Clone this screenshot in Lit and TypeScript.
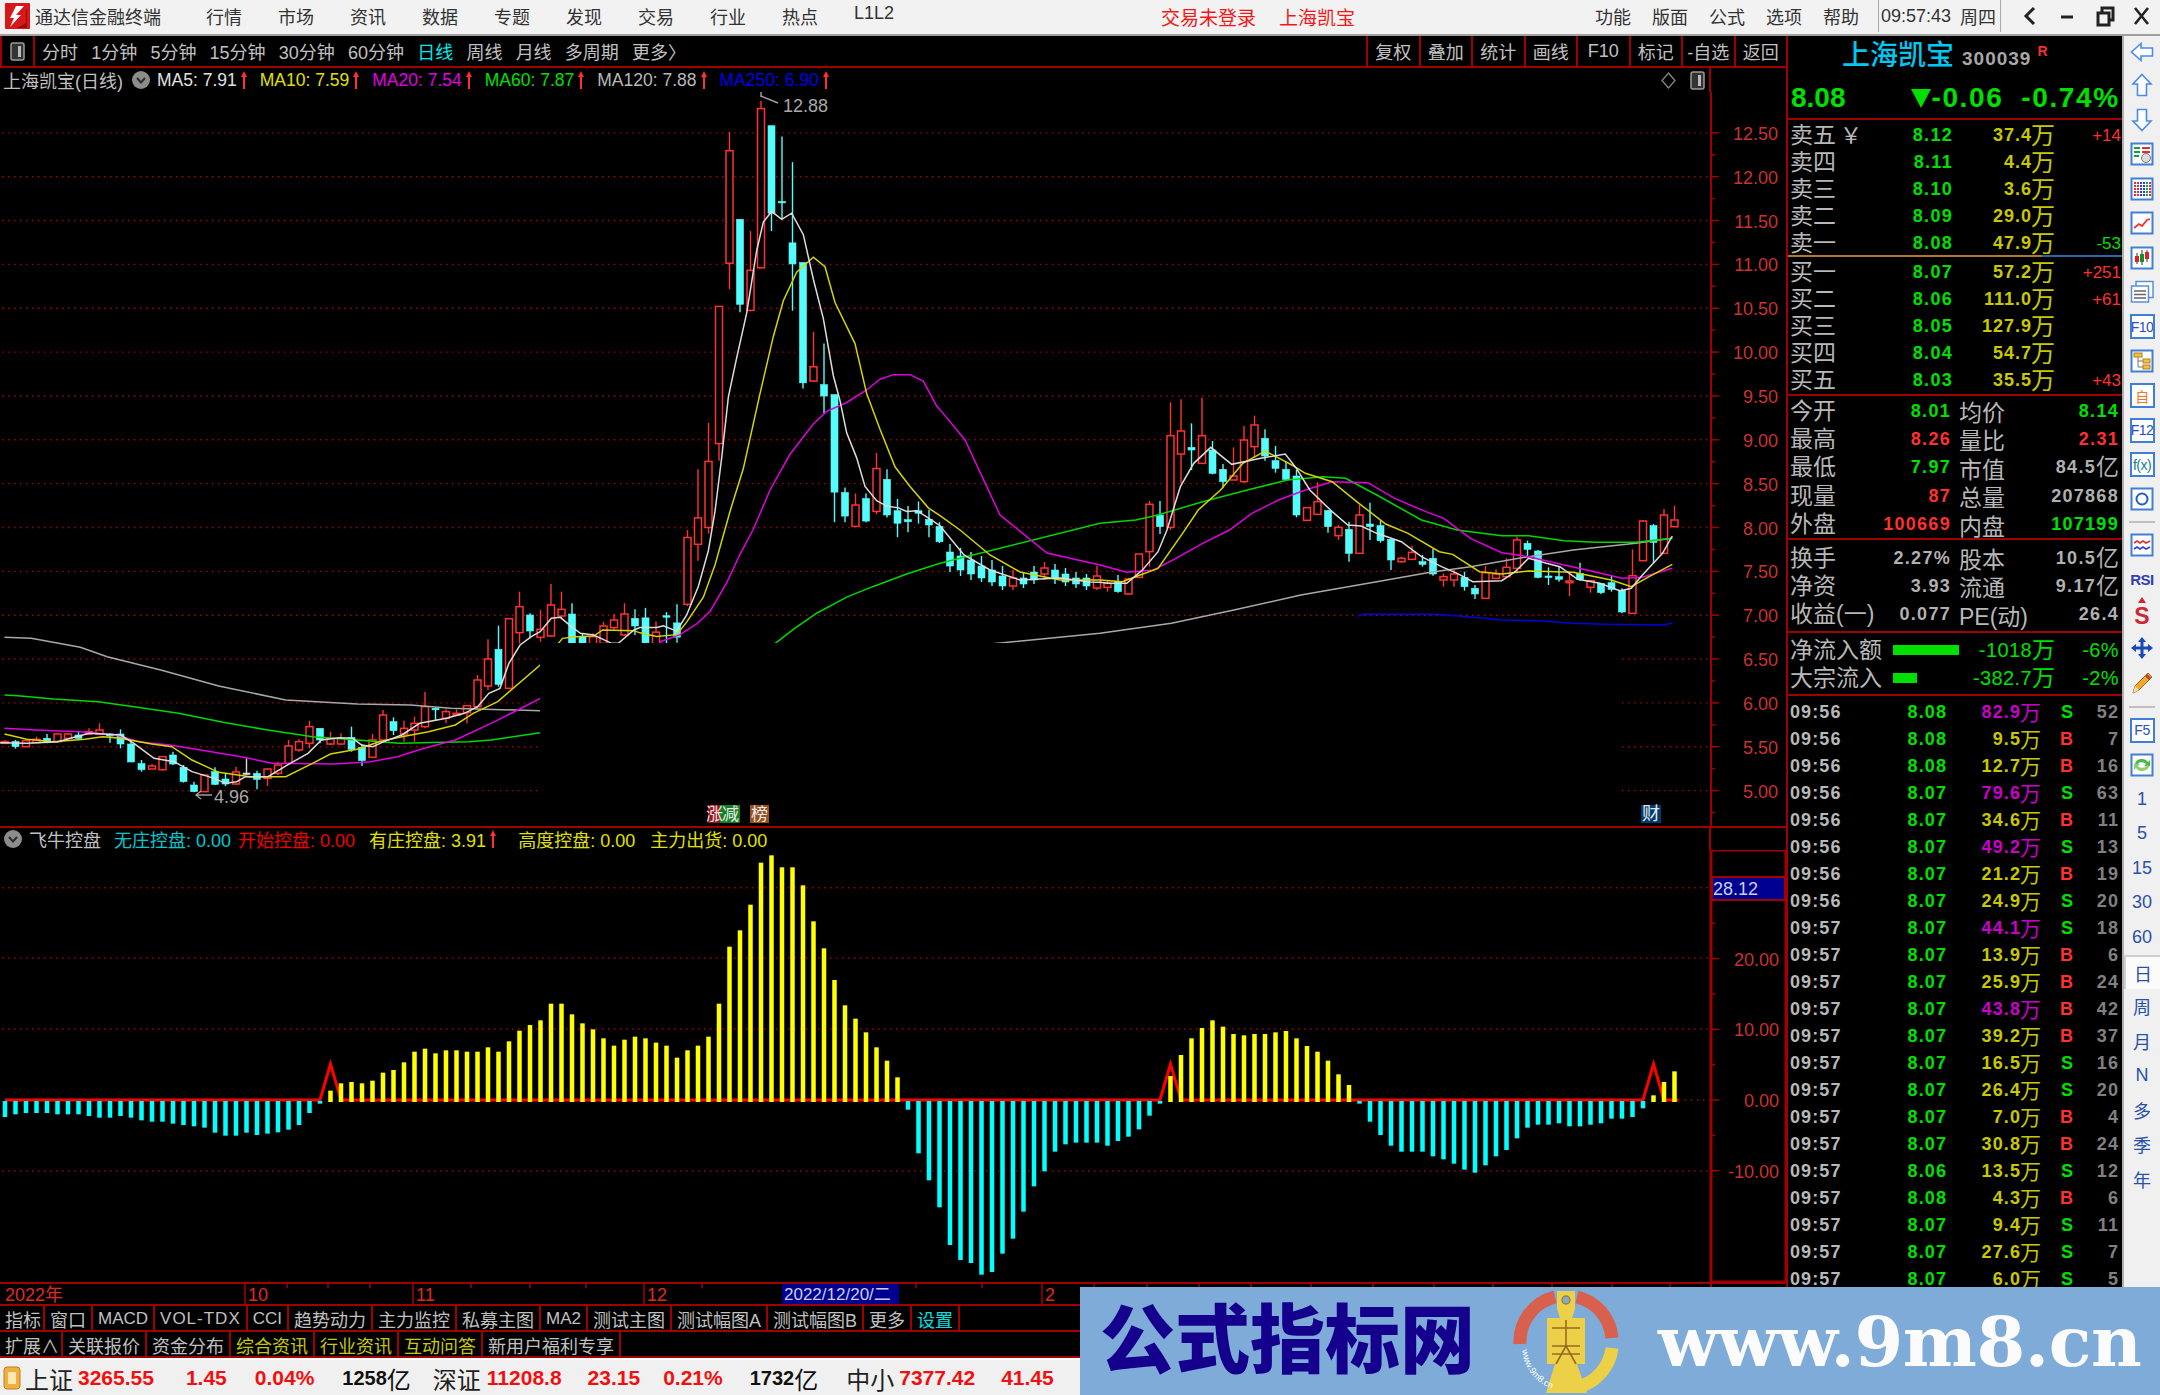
import { html, svg, css, LitElement } from 'lit';
import { customElement } from 'lit/decorators.js';

type Row = [string, number, number, number, number];

// candles are read off the chart in its own pixels, three runs with different scale
const at = (y0: number, k: number, list: Row[]): Row[] =>
  list.map(([c, a, b, d, e]) => [c, y0 + a / k, y0 + b / k, y0 + d / k, y0 + e / k] as Row);

const candles: Row[] = [
  ...at(560, 3, [
    ['r',545,550,540,552],['c',545,560,540,566],['r',542,560,540,560],['r',538,548,530,548],['c',535,548,522,550],
    ['r',522,545,522,545],['r',522,535,520,538],['c',525,535,515,538],['r',515,522,505,525],['r',510,522,490,525],
    ['c',522,528,520,548],['c',522,552,508,565],['c',552,606,540,606],['c',611,629,600,635],['r',618,627,612,627],
    ['r',590,629,590,632],['c',585,612,575,615],['c',622,665,615,668],['c',675,695,665,697],['r',645,695,645,695],
    ['c',635,673,622,675],['c',657,672,640,678],['r',636,672,620,674],['w',639,641,595,645],['c',640,658,632,688],
    ['r',627,655,625,678],['r',615,640,605,645],['r',558,610,540,615],['r',545,570,538,575],['r',500,550,482,565],
    ['c',505,540,505,550],['r',535,552,515,555],['r',535,552,520,555],['c',533,568,500,575],['c',562,602,552,618],
    ['r',540,592,522,594],['r',465,540,450,545],['c',485,512,472,525],['r',505,522,482,545],['r',490,510,470,545],
    ['r',440,500,396,505],['c',445,448,442,480],['r',455,475,448,490],['r',460,465,448,468],['r',437,458,435,490],
    ['r',360,440,345,445],['r',297,378,238,390],['c',268,373,197,380],['r',176,385,175,388],['r',140,218,95,250],
    ['c',165,213,160,235],['r',208,232,150,245],['r',135,228,72,230],['r',148,168,95,175],['c',162,250,130,268],
    ['c',230,260,220,270],['r',230,260,220,270],['r',198,250,185,260],['r',180,203,162,210],['r',162,225,130,228],
    ['c',175,198,148,225],
  ]),
  ...at(90, 2.8, [
    ['c',1478,1548,1450,1550],['r',1518,1552,1488,1552],['c',1472,1476,1462,1550],['c',1492,1532,1440,1548],
    ['r',1253,1440,1232,1445],['r',1198,1272,1062,1318],['r',1040,1225,932,1242],['r',606,990,605,1038],
    ['r',170,485,118,558],['c',362,600,362,622],['r',505,617,395,620],['r',52,498,30,498],['c',100,345,100,395],
    ['c',312,316,130,360],['c',428,487,202,618],['c',483,820,483,836],['r',775,815,677,818],['c',825,857,710,905],
    ['c',853,1126,853,1210],['c',1127,1193,1113,1210],['r',1162,1222,1130,1222],['c',1144,1207,1130,1210],
    ['r',1060,1180,1016,1188],['c',1090,1190,1062,1197],['c',1178,1213,1145,1252],['c',1203,1209,1165,1238],
    ['c',1178,1185,1152,1214],['c',1202,1218,1175,1252],['c',1222,1265,1210,1268],
  ]),
  ['c',552,566,544,572],['c',556,570,548,576],['c',560,574,552,580],['c',566,578,556,582],['c',570,582,560,586],
  ['c',576,586,566,590],['r',578,586,570,590],['c',578,584,572,588],['c',572,580,566,584],['r',568,574,562,580],
  ['c',570,578,564,584],['c',574,582,568,586],['c',578,584,572,588],['c',578,586,574,590],['r',576,588,566,590],
  ...at(370, 3, [
    ['r',640,652,632,665],['c',635,665,615,668],['r',627,672,625,673],['r',552,622,552,622],['r',403,545,393,590],
    ['c',435,470,393,492],['r',197,472,97,480],['r',183,252,88,340],['c',232,240,160,300],['r',197,280,83,280],
    ['c',240,310,213,313],['c',298,335,282,355],['r',318,330,232,330],['r',210,335,168,338],['r',165,230,137,262],
    ['c',205,258,178,272],['c',272,295,228,308],['c',298,328,275,333],['c',318,435,300,442],['r',413,451,412,452],
    ['r',395,433,337,434],['c',422,470,420,488],['r',472,497,465,510],['c',478,550,455,575],['r',435,550,405,550],
    ['c',462,470,398,510],['c',467,512,450,518],['c',508,570,508,600],['r',565,575,560,578],['r',547,568,527,570],
    ['c',575,583,555,590],['c',565,612,537,617],['r',620,630,610,650],['r',612,630,600,650],['c',622,650,605,662],
    ['c',655,672,645,687],['r',608,685,588,686],['r',612,625,598,628],['r',592,620,565,622],['r',510,595,500,610],
    ['c',520,538,512,560],['c',543,622,540,625],['c',618,620,592,645],['c',620,628,590,635],['r',633,638,605,678],
    ['c',610,628,578,632],['r',632,652,630,668],['c',640,668,640,672],['c',638,658,618,665],['c',660,726,655,730],
    ['r',617,730,538,732],['r',453,572,450,574],['c',467,517,462,580],['r',435,550,417,552],['r',450,470,407,472],
  ]),
];

const z8 = (p: number[][]) => p.map(([x, y]) => [640 + x / 3, 90 + y / 2.8]);
const z9 = (p: number[][]) => p.map(([x, y]) => [x / 2.24, 560 + y / 3]);
const z10 = (p: number[][]) => p.map(([x, y]) => [1100 + x / 2.24, 370 + y / 3]);

const maLines: { color: string; pts: number[][] }[] = [
  { color: '#a8a8a8', pts: [
    ...z9([[10,232],[70,235],[180,262],[240,290],[360,330],[490,378],[640,420],[800,432],[920,435],[1010,445],[1210,452]]),
    [985,644.5],
    ...z10([[0,790],[160,760],[300,720],[450,675],[620,635],[740,607],[830,590],[960,560],[1060,540],[1200,520],[1282,505]]),
  ] },
  { color: '#00d800', pts: [
    ...z9([[10,405],[40,407],[120,417],[220,425],[300,440],[400,460],[500,487],[600,510],[700,530],[800,540],[895,550],[1050,545],[1100,540],[1210,518]]),
    ...z8([[405,1550],[460,1510],[530,1465],[620,1420],[700,1390],[800,1355],[900,1325]]),
    ...z10([[0,460],[80,450],[130,435],[230,395],[330,360],[420,330],[500,320],[550,325],[620,375],[720,450],[800,480],[900,497],[960,497],[1040,512],[1110,517],[1200,517],[1282,505]]),
  ] },
  { color: '#0000e0', pts: z10([[578,738],[590,733],[750,733],[850,743],[900,750],[990,753],[1060,760],[1130,763],[1260,765],[1282,760]]) },
  { color: '#e000e0', pts: [
    ...z9([[10,505],[80,510],[180,515],[260,525],[310,545],[380,555],[450,570],[540,590],[610,610],[750,612],[830,605],[890,590],[950,565],[1020,540],[1100,490],[1160,450],[1210,415],[1480,250]]),
    ...z8([[60,1545],[120,1525],[170,1495],[210,1460],[260,1380],[300,1300],[340,1230],[390,1120],[450,1020],[520,935],[560,900],[620,875],[680,840],[720,810],[760,797],[810,797],[850,815],[890,885],[900,895]]),
    [965,440],[1000,515],[1047,553],
    ...z10([[0,585],[60,607],[120,600],[170,565],[230,520],[290,480],[340,430],[400,390],[460,360],[520,335],[600,338],[660,385],[730,425],[770,445],[830,505],[900,548],[960,560],[1040,585],[1100,603],[1170,625],[1215,622],[1282,595]]),
  ] },
  { color: '#d4d400', pts: [
    ...z9([[10,522],[60,538],[120,545],[190,538],[230,530],[270,535],[340,552],[385,560],[430,600],[490,637],[560,650],[640,650],[700,610],[740,582],[800,568],[850,545],[900,530],[960,515],[1020,495],[1060,460],[1115,425],[1210,315],[1260,235],[1290,230],[1330,228],[1350,210],[1420,212]]),
    ...z8([[0,1520],[50,1530],[110,1525],[140,1490],[190,1420],[225,1330],[270,1180],[310,1060],[360,850],[400,690],[430,590],[470,510],[520,468],[555,495],[585,595],[645,710],[680,850],[720,950],[765,1055],[810,1110],[865,1170],[900,1192]]),
    [960,530],[990,555],[1020,572],[1060,580],[1090,580],
    ...z10([[0,630],[50,635],[90,615],[130,595],[185,490],[220,420],[270,360],[320,280],[370,243],[430,285],[460,310],[520,335],[580,400],[640,462],[690,490],[760,545],[790,553],[850,605],[900,612],[960,603],[1060,607],[1145,630],[1190,650],[1230,620],[1282,583]]),
  ] },
  { color: '#dcdcdc', pts: [
    ...z9([[0,548],[60,550],[130,545],[170,530],[200,520],[270,525],[300,550],[345,595],[390,605],[430,635],[480,655],[505,670],[530,665],[550,650],[600,650],[650,610],[690,580],[720,540],[760,533],[790,535],[810,555],[835,560],[860,545],[900,525],[940,490],[1000,475],[1040,460],[1070,440],[1095,400],[1120,385],[1140,310],[1165,255],[1190,230],[1210,215],[1235,175],[1255,172],[1280,200],[1300,220],[1330,225],[1370,250],[1385,250],[1420,210]]),
    ...z8([[0,1505],[50,1505],[70,1500],[110,1515],[140,1470],[175,1390],[205,1290],[225,1180],[245,1030],[265,860],[290,750],[320,625],[350,450],[370,370],[395,340],[425,362],[455,345],[490,405],[520,530],[550,640],[580,800],[600,870],[620,960],[650,1030],[675,1110],[710,1150],[740,1165],[775,1170],[800,1180],[830,1178],[860,1195],[900,1220]]),
    [964,555],[990,570],[1020,580],[1060,578],[1090,582],
    ...z10([[0,637],[20,640],[60,640],[95,600],[130,545],[150,480],[180,350],[210,280],[248,232],[295,283],[360,265],[415,252],[440,295],[470,360],[520,425],[555,465],[585,468],[620,490],[675,515],[720,560],[765,590],[800,610],[835,635],[900,632],[930,605],[960,565],[1000,580],[1030,590],[1070,628],[1120,640],[1165,663],[1190,655],[1215,615],[1260,550],[1282,498]]),
  ] },
];

// 飞牛控盘 bars, one value per day, in px x 3 above (+) or below (-) the zero line
const bars = [
  -48,-40,-36,-36,-36,-40,-40,-40,-45,-50,-50,-45,-50,-58,-62,-62,-68,-72,-76,-80,-95,-104,-104,-95,-102,-98,-94,-86,-72,-36,-8,
  28,50,54,50,58,82,90,113,145,154,140,149,149,145,145,158,145,176,208,225,239,289,289,257,230,212,185,163,181,190,185,172,163,127,149,163,190,289,460,509,586,712,734,698,698,644,536,455,360,284,244,203,158,118,68,
  -26,-157,-238,-319,-432,-477,-486,-521,-513,-458,-413,-332,-256,-211,-152,-130,-125,-125,-125,-134,-120,-107,-85,-44,-8,
  72,135,185,216,239,220,198,194,198,198,203,207,185,162,145,118,77,45,
  -8,-62,-102,-134,-152,-152,-152,-166,-175,-188,-206,-215,-193,-166,-147,-112,-80,-71,-71,-67,-76,-76,-71,-67,-53,-53,-48,-22,
  14,54,86,
];

const dayX = (i: number) => 5 + 10.5 * i;
const priceY = (p: number) => 527.5 - (p - 8) * 87.7;
const zeroY = 1100;

const buyBook = [
  ['买一', '8.07', '57.2', '+251', 'up'], ['买二', '8.06', '111.0', '+61', 'up'], ['买三', '8.05', '127.9', '', ''],
  ['买四', '8.04', '54.7', '', ''], ['买五', '8.03', '35.5', '+43', 'up'],
];
const sellBook = [
  ['卖五', '8.12', '37.4', '+14', 'up'], ['卖四', '8.11', '4.4', '', ''], ['卖三', '8.10', '3.6', '', ''],
  ['卖二', '8.09', '29.0', '', ''], ['卖一', '8.08', '47.9', '-53', 'down'],
];

const stats1 = [
  ['今开', '8.01', 'down', '均价', '8.14', 'down'], ['最高', '8.26', 'up', '量比', '2.31', 'up'],
  ['最低', '7.97', 'down', '市值', '84.5亿', 'gray'], ['现量', '87', 'up', '总量', '207868', 'gray'],
  ['外盘', '100669', 'up', '内盘', '107199', 'down'],
];
const stats2 = [
  ['换手', '2.27%', 'gray', '股本', '10.5亿', 'gray'], ['净资', '3.93', 'gray', '流通', '9.17亿', 'gray'],
  ['收益(一)', '0.077', 'gray', 'PE(动)', '26.4', 'gray'],
];

const ticks: [string, string, string, string, string][] = [
  ['09:56','8.08','82.9','S','52'],['09:56','8.08','9.5','B','7'],['09:56','8.08','12.7','B','16'],['09:56','8.07','79.6','S','63'],
  ['09:56','8.07','34.6','B','11'],['09:56','8.07','49.2','S','13'],['09:56','8.07','21.2','B','19'],['09:56','8.07','24.9','S','20'],
  ['09:57','8.07','44.1','S','18'],['09:57','8.07','13.9','B','6'],['09:57','8.07','25.9','B','24'],['09:57','8.07','43.8','B','42'],
  ['09:57','8.07','39.2','B','37'],['09:57','8.07','16.5','S','16'],['09:57','8.07','26.4','S','20'],['09:57','8.07','7.0','B','4'],
  ['09:57','8.07','30.8','B','24'],['09:57','8.06','13.5','S','12'],['09:57','8.08','4.3','B','6'],['09:57','8.07','9.4','S','11'],
  ['09:57','8.07','27.6','S','7'],['09:57','8.07','6.0','S','5'],
];

const periods = ['分时','1分钟','5分钟','15分钟','30分钟','60分钟','日线','周线','月线','多周期','更多〉'];
const actions = ['复权','叠加','统计','画线','F10','标记','-自选','返回'];
const topMenu = ['行情','市场','资讯','数据','专题','发现','交易','行业','热点','L1L2'];
const sideMenu = ['功能','版面','公式','选项','帮助'];
const tabs1 = ['指标','窗口','MACD','VOL-TDX','CCI','趋势动力','主力监控','私募主图','MA2','测试主图','测试幅图A','测试幅图B','更多','设置'];
const tabs2 = ['扩展∧','关联报价','资金分布','综合资讯','行业资讯','互动问答','新用户福利专享'];
const latinTabs = ['MACD', 'VOL-TDX', 'CCI', 'MA2'];

// text, margin before it, class
const tape: [string, number, string][] = [
  ['上证',4,'lbl'],['3265.55',5,'num'],['1.45',32,'num'],['0.04%',28,'num'],['1258亿',28,'amt'],
  ['深证',22,'lbl'],['11208.8',6,'num'],['23.15',26,'num'],['0.21%',23,'num'],['1732亿',27,'amt'],
  ['中小',28,'lbl'],['7377.42',5,'num'],['41.45',26,'num'],
];

const upArrow = html`<svg class="arrow" viewBox="0 0 8 20"><path d="M4 1 L7 7 H5 V19 H3 V7 H1 Z" fill="#ff3030"/></svg>`;
const chevron = html`<svg class="drop" viewBox="0 0 18 18"><circle cx="9" cy="9" r="9" fill="#8c8c8c"/><path d="M5 7 L9 11.5 L13 7" fill="none" stroke="#2c2c2c" stroke-width="2"/></svg>`;

const boxed = (inner: unknown) => svg`<rect x="1.5" y="1.5" width="21" height="21" fill="#fff" stroke="#3f7fd8" stroke-width="2"/>${inner}`;
const sideIcons: Record<string, unknown> = {
  left: svg`<path d="M1.5 12 L11 3.5 V8 H22.5 V16 H11 V20.5 Z" fill="#fff" stroke="#4a8ae8" stroke-width="1.6"/>`,
  up: svg`<path d="M12 1.5 L21 11 H16.5 V22.5 H7.5 V11 H3 Z" fill="#fff" stroke="#4a8ae8" stroke-width="1.6"/>`,
  down: svg`<path d="M12 22.5 L21 13 H16.5 V1.5 H7.5 V13 H3 Z" fill="#fff" stroke="#4a8ae8" stroke-width="1.6"/>`,
  board: boxed(svg`<path d="M4 6 H10 M4 10 H10 M4 14 H9" stroke="#18a038" stroke-width="2"/><path d="M12 6 H20 M12 10 H20" stroke="#e03030" stroke-width="2"/><circle cx="16" cy="16" r="4.5" fill="#ddd" stroke="#777"/>`),
  table: boxed(svg`<path d="M5 5 V20 M8 5 V20" stroke="#e03030" stroke-width="2" stroke-dasharray="2 1"/><path d="M11 5 V20 M14 5 V20" stroke="#2040e0" stroke-width="2" stroke-dasharray="2 1"/><path d="M17 5 V20" stroke="#18a038" stroke-width="2" stroke-dasharray="2 1"/><path d="M20 5 V20" stroke="#e03030" stroke-width="2" stroke-dasharray="2 1"/>`),
  trend: boxed(svg`<path d="M4 17 L9 13 L12 15 L17 9 L20 8" fill="none" stroke="#f03030" stroke-width="1.8"/>`),
  kline: boxed(svg`<path d="M7 7 V18 M12 4 V19 M17 4 V16" stroke="#333" stroke-width="1"/><rect x="5" y="10" width="4" height="6" fill="#e02020"/><rect x="10" y="8" width="4" height="8" fill="#109030"/><rect x="15" y="6" width="4" height="7" fill="#e02020"/>`),
  pages: svg`<rect x="6" y="1.5" width="17" height="16" fill="#fff" stroke="#5a90d8" stroke-width="1.5"/><rect x="1.5" y="6" width="17" height="16" fill="#fff" stroke="#5a90d8" stroke-width="1.5"/><path d="M4 11 H16 M4 14.5 H16 M4 18 H16" stroke="#666" stroke-width="1.5"/>`,
  tree: boxed(svg`<path d="M8 8 V18 H13 M8 12 H13" fill="none" stroke="#777"/><rect x="4" y="4" width="8" height="4" fill="#f2c040" stroke="#b08020"/><rect x="13" y="10" width="7" height="4" fill="#f2c040" stroke="#b08020"/><rect x="13" y="16" width="7" height="4" fill="#f2c040" stroke="#b08020"/>`),
  ring: boxed(svg`<circle cx="12" cy="12" r="5.5" fill="none" stroke="#2060c0" stroke-width="2"/>`),
  wave: boxed(svg`<path d="M4 10 L7 8 L10 10 L13 8 L16 10 L20 8" fill="none" stroke="#e03030" stroke-width="1.6"/><path d="M4 16 L7 14 L10 16 L13 14 L16 16 L20 14" fill="none" stroke="#3040e0" stroke-width="1.6"/>`),
  move: svg`<path d="M12 1 L16 6 H13.5 V10.5 H18 V8 L23 12 L18 16 V13.5 H13.5 V18 H16 L12 23 L8 18 H10.5 V13.5 H6 V16 L1 12 L6 8 V10.5 H10.5 V6 H8 Z" fill="#1848b8"/>`,
  pencil: svg`<path d="M3 22 L5 15 L18 2 L22 6 L9 19 Z" fill="#f0a830" stroke="#a06818"/><path d="M3 22 L5 15 L9 19 Z" fill="#f0dcb0"/><path d="M16 4 L20 8" stroke="#c04030" stroke-width="3"/>`,
  cycle: boxed(svg`<path d="M5 11 A7 6 0 0 1 18 9 L20 7 V13 H14 L16 11 A5 4 0 0 0 7 12 Z" fill="#50b848"/><path d="M19 13 A7 6 0 0 1 6 15 L4 17 V11 H10 L8 13 A5 4 0 0 0 17 12 Z" fill="#8cd070"/>`),
};
const textIcons: Record<string, [string, string]> = { F10: ['F10', '#2850c0'], 自: ['自', '#f07820'], F12: ['F12', '#2850c0'], fx: ['f(x)', '#108090'], F5: ['F5', '#2850c0'] };
const sideBar: string[] = [
  'left','up','down','board','table','trend','kline','pages','F10','tree','自','F12','fx','ring','-',
  'wave','RSI','S','move','pencil','=','F5','cycle','1','5','15','30','60','日','周','月','N','多','季','年',
];

@customElement('app-root')
export class AppRoot extends LitElement {

  static styles = css`
    :host {
      display: block;
      position: relative;
      width: 2160px;
      height: 1395px;
      overflow: hidden;
      background: #000;
      font: 18px "Liberation Sans", "Noto Sans CJK SC", sans-serif;
      color: #c0c0c0;
      --line: #a00000;
    }
    svg { display: block; }
    svg text { font-family: "Liberation Sans", "Noto Sans CJK SC", sans-serif; }

    .titlebar {
      display: flex;
      align-items: center;
      height: 36px;
      padding-bottom: 2px;
      border-bottom: 2px solid #a0a0a0;
      box-sizing: border-box;
      background: #f2f2f2;
      color: #333;
      white-space: nowrap;
    }
    .title-left { display: flex; align-items: center; width: 1161px; flex: none; }
    .logo { margin: 0 5px 0 5px; width: 25px; height: 26px; }
    .menu { display: flex; gap: 36px; margin-left: 45px; }
    .trade { display: flex; gap: 23px; color: #f01818; font-size: 19px; }
    .title-right { display: flex; align-items: center; margin-left: auto; height: 100%; }
    .menu2 { display: flex; gap: 21px; margin-right: 19px; }
    .clock { display: flex; align-items: center; gap: 9px; height: 100%; padding: 0 4px 0 2px; border-left: 1px solid #aaa; border-right: 1px solid #aaa; }
    .winbtns { display: flex; width: 148px; margin-left: 11px; }
    .winbtns svg { width: 37px; height: 24px; }

    .middle { display: flex; height: 1322px; }
    .main { display: flex; flex-direction: column; width: 1788px; flex: none; border-right: 2px solid var(--line); box-sizing: border-box; }

    .toolbar { display: flex; align-items: center; height: 32px; border-bottom: 2px solid var(--line); box-sizing: border-box; flex: none; }
    .pane-btn { display: flex; align-items: center; justify-content: center; width: 35px; height: 100%; border-left: 2px solid var(--line); border-right: 2px solid var(--line); box-sizing: border-box; }
    .pane-btn svg { width: 15px; height: 19px; }
    .periods { display: flex; gap: 13.2px; margin-left: 7px; }
    .periods .on { color: #00e8e8; }
    .actions { display: flex; margin-left: auto; height: 100%; }
    .actions span { display: flex; align-items: center; justify-content: center; width: 52.5px; border-left: 2px solid var(--line); box-sizing: border-box; }

    .legend { display: flex; align-items: center; flex: none; width: 1711px; box-sizing: border-box; border-right: 2px solid var(--line); padding-left: 3px; white-space: nowrap; font-size: 17.5px; }
    .legend.top { height: 24px; }
    .legend.bottom { height: 22px; padding-left: 4px; }
    .legend .name { font-size: 18px; margin-right: 9px; }
    .arrow { width: 8px; height: 20px; margin-left: 3px; }
    .drop { width: 18px; height: 18px; margin-right: 7px; flex: none; }
    .ma { display: flex; align-items: center; margin-right: 12px; }
    .ma.white { color: #e0e0e0; }
    .ma.yellow { color: #e0e000; }
    .ma.pink { color: #e000e0; }
    .ma.green { color: #00e000; }
    .ma.gray { color: #b8b8b8; }
    .ma.blue { color: #0000e8; }
    .ctl { display: flex; align-items: center; gap: 14px; margin-left: auto; margin-right: 4px; }
    .ctl svg { width: 15px; height: 19px; }
    .bottom .name { margin-right: 13px; }
    .bottom .ind { margin-right: 7px; font-size: 18px; }
    .bottom .ind.cyan { color: #00c8d0; }
    .bottom .ind.red { color: #f00000; margin-right: 14px; }
    .bottom .ind.yel { color: #e0e000; }
    .bottom .ind.far { margin-right: 15px; }
    .bottom .hold { display: flex; align-items: center; margin-right: 21px; }
    .bottom .hold .ind { margin-right: 0; }

    .chart { flex: none; }
    .sep { flex: none; height: 2px; background: var(--line); }
    .timeaxis { flex: none; border-top: 2px solid var(--line); border-bottom: 2px solid var(--line); height: 24px; box-sizing: border-box; }

    .tabs { display: flex; flex: none; height: 26px; border-bottom: 2px solid var(--line); box-sizing: border-box; }
    .tabs span { display: flex; align-items: center; padding: 1px 5px 0; border-right: 2px solid var(--line); white-space: nowrap; }
    .tabs span:first-child { padding: 1px 2px 0 5px; }
    .tabs .latin { font-size: 17px; }
    .tabs .spaced { letter-spacing: 1px; }
    .tabs .yellow { color: #c8c800; }
    .tabs .cyan { color: #00e0e0; }

    .right { width: 334px; flex: none; display: flex; flex-direction: column; overflow: hidden; }
    .quote { height: 84px; flex: none; border-bottom: 2px solid var(--line); box-sizing: border-box; }
    .quote-name { display: flex; align-items: flex-end; height: 38px; padding-left: 54px; }
    .quote-name b { font-weight: 500; font-size: 28px; line-height: 36px; color: #00c8f0; }
    .quote-name .code { margin-left: 8px; font-size: 19px; font-weight: 700; color: #a8a8a8; letter-spacing: 1px; line-height: 30px; }
    .quote-name .r { align-self: flex-start; margin: 7px 0 0 6px; font-size: 14px; font-weight: 700; color: #f03030; }
    .quote-price { display: flex; align-items: center; height: 42px; padding-left: 3px; margin-top: 3px; font-size: 28px; font-weight: 700; color: #00e000; white-space: nowrap; }
    .quote-price .chg { display: flex; align-items: center; margin-left: 64px; letter-spacing: 1.6px; }
    .quote-price .tri { width: 22px; height: 22px; }
    .quote-price .pct { margin-left: 18px; letter-spacing: 1.6px; }

    .book { flex: none; display: flex; flex-direction: column; padding-left: 2px; box-sizing: border-box; }
    .book.sell { height: 136px; padding-top: 1px; border-bottom: 2px solid; border-image: linear-gradient(90deg, #b07828 0 76%, #2868a8 76% 100%) 1; margin-top: 1px; }
    .book.buy { height: 137px; border-bottom: 2px solid var(--line); margin-top: 2px; margin-bottom: -2px; }
    .book-row { display: grid; grid-template-columns: 101px 62px 102px 66px; height: 27px; align-items: center; white-space: nowrap; flex: none; }
    .lab { font-size: 23px; color: #b8b8b8; line-height: 27px; }
    .lab .yuan { font-size: 22px; margin-left: 4px; }
    .val, .vol, .amt, .v { display: flex; justify-content: flex-end; align-items: center; }
    .val { font-weight: 700; letter-spacing: 1.3px; }
    .vol { font-weight: 700; letter-spacing: 1px; color: #c8c800; }
    .wan { font-size: 24px; font-weight: 400; letter-spacing: 0; margin-left: -1px; line-height: 1; }
    .diff { text-align: right; font-size: 17px; }
    .up { color: #ff3030; }
    .down { color: #00e000; }
    .gray { color: #b0b0b0; }

    .stats { flex: none; padding-left: 2px; border-bottom: 2px solid var(--line); box-sizing: border-box; }
    .stats.s1 { height: 146px; }
    .stats.s2 { height: 93px; padding-top: 1px; }
    .stat-row { display: grid; grid-template-columns: 60px 101px 58px 110px; align-items: center; height: 28.4px; white-space: nowrap; }
    .stat-row .lab2 { padding-left: 8px; font-size: 23px; color: #b8b8b8; }
    .stat-row .val .yi { font-size: 23px; font-weight: 400; letter-spacing: 0; line-height: 1; }

    .flows { flex: none; height: 63px; padding: 3px 0 0 2px; border-bottom: 2px solid var(--line); box-sizing: border-box; }
    .flow-row { display: grid; grid-template-columns: 103px 90px 72px 64px; align-items: center; height: 28px; white-space: nowrap; color: #00e000; font-size: 20px; letter-spacing: .4px; }
    .flow-row .lab { letter-spacing: 0; }
    .flow-bar { height: 10px; background: #00e000; }
    .flow-row .wan { font-size: 23px; margin-left: 0; }
    .flow-row .pct { text-align: right; }

    .ticks { flex: 1; padding: 3px 0 0 2px; overflow: hidden; }
    .tick { display: grid; grid-template-columns: 116px 41px 94px 32px 46px; height: 27px; align-items: center; white-space: nowrap; font-weight: 700; letter-spacing: 1.1px; }
    .tick .t { color: #b8b8b8; }
    .tick .p { color: #00e000; text-align: right; }
    .tick .v { color: #c8c800; }
    .tick .v.big { color: #c800c8; }
    .tick .v .wan { font-size: 21px; }
    .tick .s { text-align: right; letter-spacing: 0; font-size: 18px; }
    .tick .s.S { color: #00e000; }
    .tick .s.B { color: #ff3030; }
    .tick .n { text-align: right; color: #808080; }

    .sidebar { flex: 1; display: flex; flex-direction: column; background: #f0f0f0; border-left: 2px solid #b0b0b0; box-sizing: border-box; color: #2850a8; overflow: hidden; }
    .side-item { display: flex; align-items: center; justify-content: center; height: 34.5px; flex: none; font-size: 18px; }
    .side-item:first-child { height: 32px; }
    .side-item svg { width: 24px; height: 24px; }
    .side-item.on { background: #fbfbfb; border-top: 2px solid #d0d0d0; border-left: 2px solid #d0d0d0; box-sizing: border-box; }
    .side-item.txt b { display: flex; align-items: center; justify-content: center; width: 21px; height: 21px; border: 2px solid #3f7fd8; background: #fff; font-size: 14px; font-weight: 400; letter-spacing: -.5px; white-space: nowrap; overflow: hidden; }
    .side-item .rsi { font-weight: 700; font-size: 15px; color: #3040b0; letter-spacing: -.5px; }
    .side-item .dollar { position: relative; font-weight: 700; font-size: 23px; line-height: 24px; margin-top: 5px; color: #d02830; }
    .side-item .dollar::before { content: ""; position: absolute; left: 4px; top: -7px; border: 4px solid transparent; border-bottom: 6px solid #d02830; border-top: 0; }
    .side-sep { height: 11px; flex: none; display: flex; align-items: center; padding: 0 5px; }
    .side-sep.wide { height: 13px; }
    .side-sep i { display: block; width: 100%; height: 2px; background: #c0c0c0; }

    .status { display: flex; align-items: center; height: 37px; padding-top: 1px; background: #f0f0f0; border-top: 2px solid #fff; box-sizing: border-box; white-space: nowrap; color: #111; }
    .status .ico { width: 18px; height: 24px; margin-left: 3px; flex: none; }
    .status .lbl { font-size: 24px; color: #222; }
    .status .num { font-size: 21px; font-weight: 700; color: #f01010; }
    .status .amt { font-size: 20px; font-weight: 700; color: #111; }
    .status .amt i { font-size: 24px; font-weight: 400; font-style: normal; }

    .banner { position: absolute; left: 1080px; top: 1287px; width: 1080px; height: 108px; display: flex; align-items: center; background: #7fabd8; white-space: nowrap; }
    .banner .cn { margin-left: 20px; width: 376px; flex: none; font-size: 75px; line-height: 108px; font-weight: 900; color: #14008c; }
    .banner .mark { margin-left: 34px; width: 112px; height: 108px; flex: none; }
    .banner .url { margin-left: 36px; font-family: "DejaVu Serif", serif; font-weight: 700; font-size: 70px; color: #fbfbfb; letter-spacing: -.4px; }
  `;

  renderUpper() {
    const axis = [12.5,12,11.5,11,10.5,10,9.5,9,8.5,8,7.5,7,6.5,6,5.5,5];
    return html`<svg class="chart" width="1786" height="734" viewBox="0 92 1786 734">
      ${axis.map(p => svg`<line x1="2" x2="1710" y1=${priceY(p)} y2=${priceY(p)} stroke="#b00000" stroke-width="1.4" stroke-dasharray="1.4 4.6"/>`)}
      ${candles.map(([k, top, bot, wt, wb], i) => {
        const x = dayX(i);
        const col = k === 'r' ? '#ff3232' : k === 'w' ? '#d8d8d8' : '#54fcfc';
        return svg`<line x1=${x} x2=${x} y1=${wt} y2=${wb} stroke=${col} stroke-width="1.4"/>
          <rect x=${x - 3.5} y=${top} width="7" height=${Math.max(bot - top, 1.5)} fill=${k === 'r' ? '#000' : col} stroke=${col} stroke-width=${k === 'r' ? 1.5 : 0.6}/>`;
      })}
      ${maLines.map(l => svg`<polyline points=${l.pts.map(p => p.join(',')).join(' ')} fill="none" stroke=${l.color} stroke-width="1.5"/>`)}
      <rect x="540" y="643" width="1080" height="183" fill="#000"/>
      <path d="M761 97 V92 M761 96 L778 103" fill="none" stroke="#a0a0a0" stroke-width="1.4"/>
      <text x="783" y="112" font-size="18" fill="#a8a8a8">12.88</text>
      <path d="M212 795 H196 M201 791 L196 795 L201 799" fill="none" stroke="#a0a0a0" stroke-width="1.4"/>
      <text x="214" y="803" font-size="18" fill="#a8a8a8">4.96</text>
      <rect x="708" y="805" width="12" height="18" fill="#a01010"/><rect x="720" y="805" width="20" height="18" fill="#108020"/>
      <rect x="750" y="805" width="19" height="18" fill="#985020"/><rect x="1641" y="805" width="20" height="18" fill="#003a70"/>
      <text x="706" y="820" font-size="17" fill="#e8e8e8">涨</text><text x="722" y="820" font-size="17" fill="#e8e8e8">减</text>
      <text x="751" y="820" font-size="17" fill="#e8e8e8">榜</text><text x="1642" y="820" font-size="18" fill="#e8e8e8">财</text>
      ${this.renderAxis(axis.map(p => [priceY(p), p.toFixed(2)]), 43.85)}
    </svg>`;
  }

  renderAxis(labels: [number, string][] | any[], half: number) {
    return svg`<line x1="1711" x2="1711" y1="92" y2="1282" stroke="#a00000" stroke-width="2"/>
      ${labels.map(([y, t]) => svg`
        <line x1="1711" x2="1719" y1=${y} y2=${y} stroke="#a00000" stroke-width="1.5"/>
        <line x1="1711" x2="1715" y1=${y + half / 2} y2=${y + half / 2} stroke="#a00000" stroke-width="1.5"/>
        <text x="1778" y=${y + 7} text-anchor="end" font-size="18" fill="#c83232">${t}</text>`)}`;
  }

  renderLower() {
    const yOf = (v: number) => zeroY - v * 7.07;
    const line: number[][] = [[5, zeroY]];
    [31, 111, 157].forEach(i => line.push([dayX(i - 1), zeroY], [dayX(i), zeroY - 36], [dayX(i + 1), zeroY]));
    line.push([dayX(159) + 4, zeroY]);
    return html`<svg class="chart" width="1786" height="432" viewBox="0 850 1786 432">
      ${[887.7, 958, 1029, 1171].map(y => svg`<line x1="2" x2="1710" y1=${y} y2=${y} stroke="#b00000" stroke-width="1.4" stroke-dasharray="1.4 4.6"/>`)}
      <line x1="1685" x2="1710" y1=${zeroY} y2=${zeroY} stroke="#b00000" stroke-width="1.4" stroke-dasharray="1.4 4.6"/>
      <polyline points=${line.map(p => p.join(',')).join(' ')} fill="none" stroke="#ff0000" stroke-width="3"/>
      ${bars.map((h, i) => {
        const top = zeroY + (h > 0 ? -h / 3 : 1);
        return svg`<rect x=${dayX(i) - 2.25} y=${top} width="4.5" height=${Math.abs(h) / 3 + (h > 0 ? 2 : 0)} fill=${h > 0 ? '#ffff00' : '#00ffff'}/>`;
      })}
      <rect x="1711" y="850" width="75" height="432" fill="none" stroke="#a00000" stroke-width="3"/>
      ${[20, 10, 0, -10].map(v => svg`
        <line x1="1711" x2="1719" y1=${yOf(v)} y2=${yOf(v)} stroke="#a00000" stroke-width="1.5"/>
        <line x1="1711" x2="1715" y1=${yOf(v) - 35.3} y2=${yOf(v) - 35.3} stroke="#a00000" stroke-width="1.5"/>
        <text x="1779" y=${yOf(v) + 7} text-anchor="end" font-size="18" fill="#c83232">${v.toFixed(2)}</text>`)}
      <rect x="1712" y="877" width="73" height="23" fill="#000090" stroke="#a00000" stroke-width="2"/>
      <text x="1713" y="895" font-size="18" fill="#c8d0f0">28.12</text>
    </svg>`;
  }

  renderTimeAxis() {
    const months: [number, string][] = [[245, '10'], [413, '11'], [644, '12'], [1042, '2']];
    const minor = [287, 328, 370, 471, 530, 586, 702, 916, 982, 1094, 1147, 1199, 1251, 1311, 1373, 1434, 1493, 1552, 1612, 1670];
    return html`<div class="timeaxis"><svg width="1786" height="20" viewBox="0 0 1786 20">
      ${minor.map(x => svg`<line x1=${x} x2=${x} y1="0" y2="4" stroke="#a00000" stroke-width="1.5"/>`)}
      <text x="5" y="17" font-size="18" fill="#e02828">2022年</text>
      ${months.map(([x, t]) => svg`<line x1=${x} x2=${x} y1="0" y2="20" stroke="#a00000" stroke-width="1.5"/>
        <text x=${x + 3} y="17" font-size="18" fill="#e02828">${t}</text>`)}
      <rect x="782" y="0" width="117" height="20" fill="#000090"/>
      <text x="784" y="16" font-size="17" fill="#c8d0f0">2022/12/20/二</text>
      <line x1="1711" x2="1711" y1="0" y2="20" stroke="#a00000" stroke-width="2"/>
    </svg></div>`;
  }

  bookRow(r: string[], yuan = false) {
    return html`<div class="book-row">
      <span class="lab">${r[0]}${yuan ? html`<span class="yuan">￥</span>` : ''}</span>
      <span class="val down" style="grid-column:2">${r[1]}</span>
      <span class="vol">${r[2]}<span class="wan">万</span></span>
      <span class="diff ${r[4]}">${r[3]}</span>
    </div>`;
  }

  statValue(v: string, cls: string) {
    const yi = v.endsWith('亿');
    return html`<span class="val ${cls}">${yi ? v.slice(0, -1) : v}${yi ? html`<span class="yi">亿</span>` : ''}</span>`;
  }

  statRow(r: string[]) {
    return html`<div class="stat-row">
      <span class="lab">${r[0]}</span>${this.statValue(r[1], r[2])}
      <span class="lab2">${r[3]}</span>${this.statValue(r[4], r[5])}
    </div>`;
  }

  renderRight() {
    return html`<div class="right">
      <div class="quote">
        <div class="quote-name"><b>上海凯宝</b><span class="code">300039</span><span class="r">R</span></div>
        <div class="quote-price">
          <span>8.08</span>
          <span class="chg"><svg class="tri" viewBox="0 0 22 22"><path d="M1 2 H21 L11 21 Z" fill="#00e000"/></svg>-0.06</span>
          <span class="pct">-0.74%</span>
        </div>
      </div>
      <div class="book sell">${sellBook.map((r, i) => this.bookRow(r, i === 0))}</div>
      <div class="book buy">${buyBook.map(r => this.bookRow(r))}</div>
      <div class="stats s1">${stats1.map(r => this.statRow(r))}</div>
      <div class="stats s2">${stats2.map(r => this.statRow(r))}</div>
      <div class="flows">
        <div class="flow-row"><span class="lab">净流入额</span><span class="flow-bar" style="width:66px"></span><span class="amt">-1018<span class="wan">万</span></span><span class="pct">-6%</span></div>
        <div class="flow-row"><span class="lab">大宗流入</span><span class="flow-bar" style="width:24px"></span><span class="amt">-382.7<span class="wan">万</span></span><span class="pct">-2%</span></div>
      </div>
      <div class="ticks">
        ${ticks.map(([t, p, v, s, n]) => html`<div class="tick">
          <span class="t">${t}</span><span class="p">${p}</span>
          <span class="v ${parseFloat(v) >= 40 ? 'big' : ''}">${v}<span class="wan">万</span></span>
          <span class="s ${s}">${s}</span><span class="n">${n}</span>
        </div>`)}
      </div>
    </div>`;
  }

  renderSidebar() {
    let seps = 0;
    return html`<div class="sidebar">
      ${sideBar.map(k => {
        if (k === '-' || k === '=') {
          seps++;
          return html`<div class="side-sep ${seps > 1 ? 'wide' : ''}"><i></i></div>`;
        }
        if (sideIcons[k]) return html`<div class="side-item"><svg viewBox="0 0 24 24">${sideIcons[k]}</svg></div>`;
        if (textIcons[k]) {
          const [t, c] = textIcons[k];
          return html`<div class="side-item txt"><b style="color:${c}">${t}</b></div>`;
        }
        if (k === 'RSI') return html`<div class="side-item"><span class="rsi">RSI</span></div>`;
        if (k === 'S') return html`<div class="side-item"><span class="dollar">S</span></div>`;
        return html`<div class="side-item ${k === '日' ? 'on' : ''}">${k}</div>`;
      })}
    </div>`;
  }

  render() {
    return html`
      <div class="titlebar">
        <div class="title-left">
          <svg class="logo" viewBox="0 0 25 26"><rect width="25" height="26" rx="1" fill="#d81818"/><path d="M19 3 L11 12 H16 L5 24 L9 15 H5 L11 3 Z" fill="#fff"/><path d="M21 6 V20 L12 25 H22 V6 Z" fill="#901010"/></svg>
          <span>通达信金融终端</span>
          <div class="menu">${topMenu.map(m => html`<span>${m}</span>`)}</div>
        </div>
        <div class="trade"><span>交易未登录</span><span>上海凯宝</span></div>
        <div class="title-right">
          <div class="menu2">${sideMenu.map(m => html`<span>${m}</span>`)}</div>
          <div class="clock"><span>09:57:43</span><span>周四</span></div>
          <div class="winbtns">
            <svg viewBox="0 0 37 24"><path d="M22 4 L14 12 L22 20" fill="none" stroke="#222" stroke-width="3"/></svg>
            <svg viewBox="0 0 37 24"><path d="M12 13 H24" stroke="#222" stroke-width="3"/></svg>
            <svg viewBox="0 0 37 24"><path d="M12 9 H23 V21 H12 Z M16 9 V4 H27 V16 H23" fill="none" stroke="#222" stroke-width="3"/></svg>
            <svg viewBox="0 0 37 24"><path d="M12 4 L25 20 M25 4 L12 20" stroke="#222" stroke-width="2.6"/></svg>
          </div>
        </div>
      </div>

      <div class="middle">
        <div class="main">
          <div class="toolbar">
            <div class="pane-btn"><svg viewBox="0 0 15 19"><rect x="1" y="1" width="13" height="17" rx="2" fill="#333" stroke="#9a9a9a" stroke-width="1.5"/><rect x="8" y="4" width="3" height="11" fill="#bbb"/></svg></div>
            <div class="periods">${periods.map(p => html`<span class=${p === '日线' ? 'on' : ''}>${p}</span>`)}</div>
            <div class="actions">${actions.map(a => html`<span>${a}</span>`)}</div>
          </div>

          <div class="legend top">
            <span class="name">上海凯宝(日线)</span>${chevron}
            <span class="ma white">MA5: 7.91${upArrow}</span>
            <span class="ma yellow">MA10: 7.59${upArrow}</span>
            <span class="ma pink">MA20: 7.54${upArrow}</span>
            <span class="ma green">MA60: 7.87${upArrow}</span>
            <span class="ma gray">MA120: 7.88${upArrow}</span>
            <span class="ma blue">MA250: 6.90${upArrow}</span>
            <div class="ctl">
              <svg viewBox="0 0 15 19"><path d="M7.5 2 L14 9.5 L7.5 17 L1 9.5 Z" fill="none" stroke="#808080" stroke-width="1.4"/></svg>
              <svg viewBox="0 0 15 19"><rect x="1" y="1" width="13" height="17" rx="2" fill="#333" stroke="#9a9a9a" stroke-width="1.5"/><rect x="8" y="4" width="3" height="11" fill="#bbb"/></svg>
            </div>
          </div>
          ${this.renderUpper()}
          <div class="sep"></div>

          <div class="legend bottom">
            ${chevron}<span class="name">飞牛控盘</span>
            <span class="ind cyan">无庄控盘: 0.00</span>
            <span class="ind red">开始控盘: 0.00</span>
            <span class="hold"><span class="ind yel">有庄控盘: 3.91</span>${upArrow}</span>
            <span class="ind yel far">高度控盘: 0.00</span>
            <span class="ind yel">主力出货: 0.00</span>
          </div>
          ${this.renderLower()}
          ${this.renderTimeAxis()}

          <div class="tabs">${tabs1.map(t => html`<span class="${t === '设置' ? 'cyan' : ''} ${latinTabs.includes(t) ? 'latin' : ''} ${t === 'VOL-TDX' ? 'spaced' : ''}">${t}</span>`)}</div>
          <div class="tabs">${tabs2.map((t, i) => html`<span class=${i >= 3 && i <= 5 ? 'yellow' : ''}>${t}</span>`)}</div>
        </div>
        ${this.renderRight()}
        ${this.renderSidebar()}
      </div>

      <div class="status">
        <svg class="ico" viewBox="0 0 18 24"><rect x="1" y="1" width="16" height="22" rx="3" fill="#f0b040" stroke="#c08020"/><rect x="5" y="6" width="8" height="12" fill="#fde8b0"/></svg>
        ${tape.map(([t, m, c]) => html`<span class=${c} style="margin-left:${m}px">${c === 'amt' ? html`${t.slice(0, -1)}<i>${t.slice(-1)}</i>` : t}</span>`)}
      </div>

      <div class="banner">
        <span class="cn">公式指标网</span>
        <svg class="mark" viewBox="1510 1285 112 108">
          <path d="M1520 1342 A46 46 0 0 1 1555 1295 M1577 1295 A46 46 0 0 1 1612 1336" fill="none" stroke="#d8604c" stroke-width="13"/>
          <path d="M1612 1346 A46 46 0 0 1 1578 1385" fill="none" stroke="#ecd048" stroke-width="13"/>
          <path d="M1557 1289 H1575 V1307 L1572 1316 H1585 V1362 H1577 L1587 1391 H1546 L1555 1362 H1547 V1316 H1560 L1557 1307 Z" fill="#ecd048"/>
          <circle cx="1566" cy="1298" r="4" fill="#7fabd8" stroke="#a08030" stroke-width="1.5"/>
          <path d="M1552 1326 H1580 M1566 1318 V1344 M1552 1344 H1580 M1552 1352 H1580 M1566 1344 L1556 1362 M1566 1344 L1576 1362" fill="none" stroke="#9a6a20" stroke-width="1.6"/>
          <path id="ring" d="M1522 1348 A46 46 0 0 0 1556 1388" fill="none"/>
          <text font-size="9" fill="#fff"><textPath href="#ring">www.9m8.cn</textPath></text>
        </svg>
        <span class="url">www.9m8.cn</span>
      </div>
    `;
  }
}
